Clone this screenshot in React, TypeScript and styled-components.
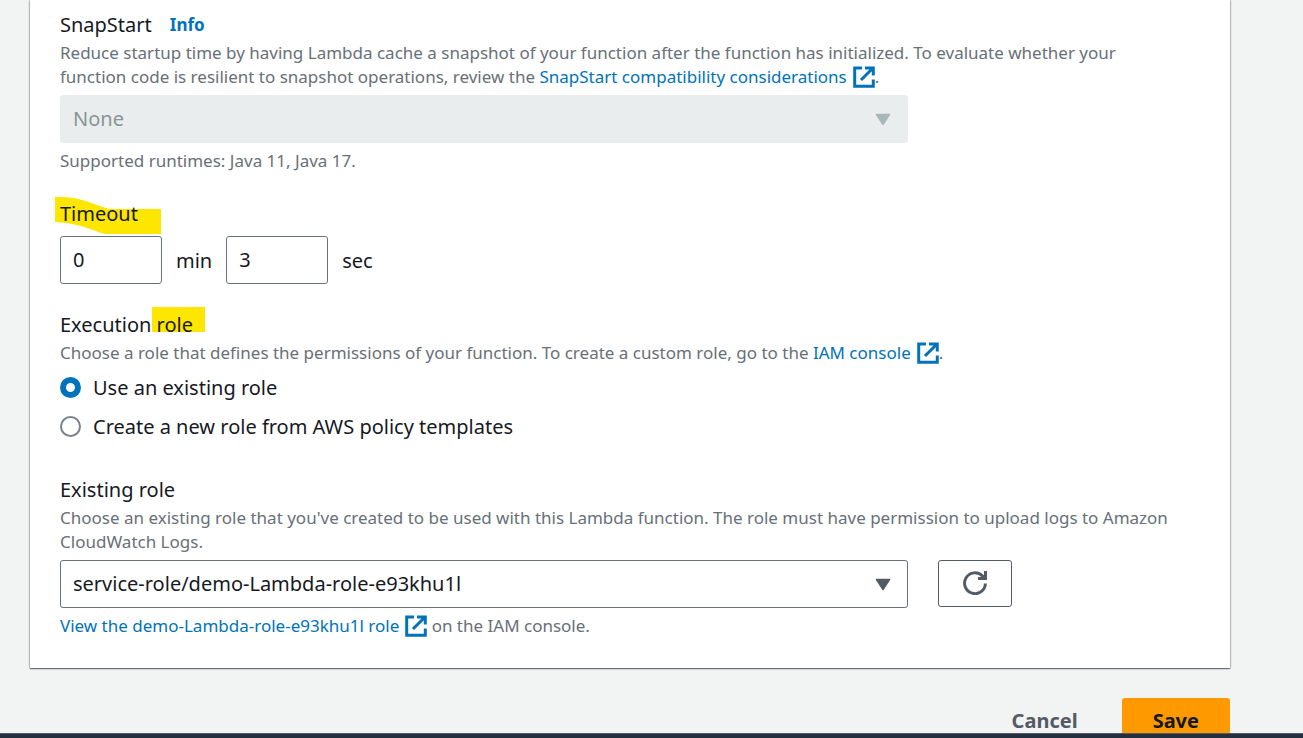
import React from "react";
import styled, { createGlobalStyle } from "styled-components";

const colors = {
  text: "#16191f",
  muted: "#687078",
  link: "#0073bb",
  border: "#687078",
  button: "#545b64",
  page: "#f2f3f3",
  disabled: "#eaeded",
  marker: "#ffe600",
};

const GlobalStyle = createGlobalStyle`
  *, *::before, *::after { box-sizing: border-box; }
  body {
    margin: 0;
    background: ${colors.page};
    color: ${colors.text};
    font-family: "Noto Sans", "Open Sans", sans-serif;
    font-size: 20px;
    line-height: 33px;
  }
  button, input, select { font: inherit; color: inherit; }
`;

const Page = styled.div`
  display: flex;
  flex-direction: column;
  height: 100vh;
  overflow: hidden;
`;

const Content = styled.main`
  flex: 1;
  min-height: 0;
  overflow: hidden;
  padding: 0 73px 0 30px;
`;

const Panel = styled.form`
  display: flex;
  flex-direction: column;
  gap: 24px;
  padding: 8px 30px 30px;
  background: #fff;
  box-shadow: 0 1px 1px 0 rgba(0, 28, 36, 0.5), 0 0 2px 0 rgba(0, 28, 36, 0.6);
`;

const Field = styled.section<{ $spaced?: boolean }>`
  display: flex;
  flex-direction: column;
  gap: 6px;
  padding-top: ${(p) => (p.$spaced ? 6 : 0)}px;
`;

const Label = styled.label`
  position: relative;
  isolation: isolate;
`;

const Heading = styled.div`
  display: flex;
  align-items: center;
  gap: 18px;
`;

const Hint = styled.div`
  font-size: 17px;
  line-height: 24px;
  color: ${colors.muted};
`;

const Link = styled.a`
  color: ${colors.link};
  text-decoration: none;
`;

const InfoLink = styled(Link)`
  font-size: 17px;
  font-weight: 700;
`;

const LinkIcon = styled.svg`
  width: 22px;
  height: 22px;
  margin-left: 6px;
  vertical-align: -5px;
`;

const Row = styled.div`
  display: flex;
  align-items: flex-start;
  gap: 30px;
`;

const SelectBox = styled.div`
  position: relative;
  width: calc(75% - 7px);
`;

const Select = styled.select`
  display: block;
  appearance: none;
  width: 100%;
  height: 48px;
  padding: 0 60px 2px 12px;
  border: 1px solid ${colors.border};
  border-radius: 3px;
  background: #fff;
  opacity: 1;
  &:disabled {
    color: #879596;
    border-color: ${colors.disabled};
    background: ${colors.disabled};
  }
`;

const Caret = styled.svg`
  position: absolute;
  right: 17px;
  top: 18px;
  width: 16px;
  height: 13px;
  pointer-events: none;
`;

const TimeInput = styled.input`
  width: 102px;
  height: 48px;
  padding: 0 12px 2px;
  border: 1px solid ${colors.border};
  border-radius: 3px;
  background: #fff;
`;

const TimeRow = styled.div`
  display: flex;
  align-items: center;
  gap: 14px;
`;

const Choice = styled.label`
  display: flex;
  align-items: center;
  gap: 12px;
`;

const Radio = styled.input`
  appearance: none;
  width: 21px;
  height: 21px;
  margin: 0;
  border: 2px solid #7b838a;
  border-radius: 50%;
  background: #fff;
  &:checked {
    border: 6px solid ${colors.link};
  }
`;

const Button = styled.button<{ $kind: "normal" | "plain" | "primary" }>`
  display: flex;
  align-items: center;
  justify-content: center;
  height: 47px;
  padding: 0 ${(p) => (p.$kind === "normal" ? 24 : 30)}px 2px;
  border: 1px solid ${(p) => (p.$kind === "normal" ? colors.button : "transparent")};
  border-radius: 3px;
  background: ${(p) => ({ normal: "#fff", plain: "transparent", primary: "#ff9900" })[p.$kind]};
  color: ${(p) => (p.$kind === "primary" ? colors.text : colors.button)};
  font-weight: 700;
`;

const Actions = styled.div`
  display: flex;
  justify-content: flex-end;
  gap: 13px;
  padding-top: 30px;
`;

const FooterBar = styled.footer`
  height: 5px;
  background: #232f3e;
  border-top: 1px solid #545b64;
`;

const Stroke = styled.svg`
  position: absolute;
  z-index: -1;
  left: -5px;
  top: 0;
  width: 106px;
  height: 37px;
`;

const Marked = styled.span`
  position: relative;
  &::before {
    content: "";
    position: absolute;
    z-index: -1;
    left: -5px;
    right: -12px;
    top: -4px;
    height: 25px;
    background: ${colors.marker};
  }
`;

const External = () => (
  <LinkIcon viewBox="0 0 22 22" fill="none" stroke={colors.link} strokeWidth="3" aria-hidden="true">
    <path d="M9 2H1.7v18.3h18.6V13.5" />
    <path d="M12 1.9h8.3V9.5M20 2 8 14" />
  </LinkIcon>
);

const Arrow = ({ color }: { color: string }) => (
  <Caret viewBox="0 0 16 13" aria-hidden="true">
    <path d="M1.5 1.5h13L8 11.5z" fill={color} stroke={color} strokeWidth="1.5" strokeLinejoin="round" />
  </Caret>
);

export default function App() {
  return (
    <Page>
      <GlobalStyle />
      <Content>
        <Panel id="settings" onSubmit={(e) => e.preventDefault()}>
          <Field>
            <div>
              <Heading>
                <Label htmlFor="snapstart">SnapStart</Label>
                <InfoLink href="#info">Info</InfoLink>
              </Heading>
              <Hint>
                Reduce startup time by having Lambda cache a snapshot of your function after the function has
                initialized. To evaluate whether your
                <br />
                function code is resilient to snapshot operations, review the{" "}
                <Link href="#snapstart">
                  SnapStart compatibility considerations
                  <External />
                </Link>
                .
              </Hint>
            </div>
            <SelectBox>
              <Select id="snapstart" disabled>
                <option>None</option>
              </Select>
              <Arrow color="#aab7b8" />
            </SelectBox>
            <Hint>Supported runtimes: Java 11, Java 17.</Hint>
          </Field>

          <Field>
            <Label htmlFor="minutes">
              <Stroke viewBox="0 0 106 37" aria-hidden="true">
                <path d="M0 0c24-1 38 7 54 12h52v25H50C36 33 24 26 0 25z" fill={colors.marker} />
              </Stroke>
              Timeout
            </Label>
            <TimeRow>
              <TimeInput id="minutes" defaultValue="0" />
              <label htmlFor="minutes">min</label>
              <TimeInput id="seconds" defaultValue="3" />
              <label htmlFor="seconds">sec</label>
            </TimeRow>
          </Field>

          <Field role="radiogroup" aria-labelledby="execution-role">
            <div>
              <Label as="div" id="execution-role">
                Execution <Marked>role</Marked>
              </Label>
              <Hint>
                Choose a role that defines the permissions of your function. To create a custom role, go to the{" "}
                <Link href="#iam">
                  IAM console
                  <External />
                </Link>
                .
              </Hint>
            </div>
            <Choice>
              <Radio type="radio" name="role" defaultChecked />
              Use an existing role
            </Choice>
            <Choice>
              <Radio type="radio" name="role" />
              Create a new role from AWS policy templates
            </Choice>
          </Field>

          <Field $spaced>
            <div>
              <Label htmlFor="existing-role">Existing role</Label>
              <Hint>
                Choose an existing role that you've created to be used with this Lambda function. The role must have
                permission to upload logs to Amazon CloudWatch Logs.
              </Hint>
            </div>
            <Row>
              <SelectBox>
                <Select id="existing-role">
                  <option>service-role/demo-Lambda-role-e93khu1l</option>
                </Select>
                <Arrow color={colors.button} />
              </SelectBox>
              <Button type="button" $kind="normal" aria-label="Refresh roles">
                <svg width="24" height="24" viewBox="0 0 24 24" fill="none" stroke={colors.button} strokeWidth="3">
                  <path d="M22.4 12.5A10.4 10.4 0 1 1 19.5 5L22 8" />
                  <path d="M22.5 0v7.5H15" />
                </svg>
              </Button>
            </Row>
            <Hint>
              <Link href="#role">
                View the demo-Lambda-role-e93khu1l role
                <External />
              </Link>{" "}
              on the IAM console.
            </Hint>
          </Field>
        </Panel>
        <Actions>
          <Button type="button" $kind="plain">
            Cancel
          </Button>
          <Button type="submit" form="settings" $kind="primary">
            Save
          </Button>
        </Actions>
      </Content>
      <FooterBar />
    </Page>
  );
}
